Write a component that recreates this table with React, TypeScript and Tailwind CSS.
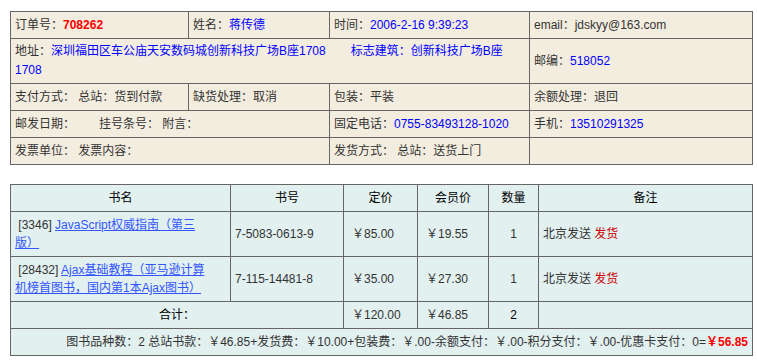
import React from "react";

const td = "border border-[#666] px-[4px] align-middle";

export default function App() {
  return (
    <div className="bg-white w-[757px] h-[362px] pt-[11px] pl-[10px] text-[12px] leading-[18px] text-[#333] font-['Liberation_Sans','Noto_Sans_CJK_SC',sans-serif]">
      {/* Order info */}
      <table className="table-fixed border-collapse w-[742px] bg-[#f3eddf]">
        <colgroup>
          <col className="w-[178px]" />
          <col className="w-[141px]" />
          <col className="w-[200px]" />
          <col className="w-[223px]" />
        </colgroup>
        <tbody>
          <tr className="h-[27px]">
            <td className={td}>
              订单号：<span className="text-[#ff0000] font-bold">708262</span>
            </td>
            <td className={td}>
              姓名：<span className="text-[#0000ff]">蒋传德</span>
            </td>
            <td className={td}>
              时间：<span className="text-[#0000ff]">2006-2-16 9:39:23</span>
            </td>
            <td className={td}>email：jdskyy@163.com</td>
          </tr>
          <tr className="h-[45px]">
            <td className={td + " leading-[19px]"} colSpan={3}>
              地址：<span className="text-[#0000ff]">深圳福田区车公庙天安数码城创新科技广场B座1708</span>
              <span className="ml-[25px] text-[#0000ff]">标志建筑：创新科技广场B座</span>
              <br />
              <span className="text-[#0000ff]">1708</span>
            </td>
            <td className={td}>
              邮编：<span className="text-[#0000ff]">518052</span>
            </td>
          </tr>
          <tr className="h-[27px]">
            <td className={td}>支付方式： 总站：货到付款</td>
            <td className={td}>缺货处理：取消</td>
            <td className={td}>包装：平装</td>
            <td className={td}>余额处理：退回</td>
          </tr>
          <tr className="h-[27px]">
            <td className={td} colSpan={2}>
              邮发日期：<span className="ml-[24px]">挂号条号：</span> 附言：
            </td>
            <td className={td}>
              固定电话：<span className="text-[#0000ff]">0755-83493128-1020</span>
            </td>
            <td className={td}>
              手机：<span className="text-[#0000ff]">13510291325</span>
            </td>
          </tr>
          <tr className="h-[27px]">
            <td className={td} colSpan={2}>发票单位： 发票内容：</td>
            <td className={td}>发货方式： 总站：送货上门</td>
            <td className={td}></td>
          </tr>
        </tbody>
      </table>

      {/* Book list */}
      <table className="table-fixed border-collapse w-[742px] bg-[#e2f0f0] mt-[19px]">
        <colgroup>
          <col className="w-[220px]" />
          <col className="w-[113px]" />
          <col className="w-[74px]" />
          <col className="w-[71px]" />
          <col className="w-[50px]" />
          <col className="w-[214px]" />
        </colgroup>
        <tbody>
          <tr className="h-[27px] text-black">
            <td className={td + " text-center"}>书名</td>
            <td className={td + " text-center"}>书号</td>
            <td className={td + " text-center"}>定价</td>
            <td className={td + " text-center"}>会员价</td>
            <td className={td + " text-center"}>数量</td>
            <td className={td + " text-center"}>备注</td>
          </tr>
          {[
            { id: "3346", line1: "JavaScript权威指南（第三", line2: "版）", isbn: "7-5083-0613-9", price: "85.00", member: "19.55" },
            { id: "28432", line1: "Ajax基础教程（亚马逊计算", line2: "机榜首图书，国内第1本Ajax图书）", isbn: "7-115-14481-8", price: "35.00", member: "27.30" },
          ].map((b) => (
            <tr key={b.id} className="h-[45px]">
              <td className={td}>
                &nbsp;[{b.id}]{" "}
                <a href="#" className="text-[#3355ff] underline">
                  {b.line1}
                  <br />
                  {b.line2}
                </a>
              </td>
              <td className={td}>{b.isbn}</td>
              <td className={td + " pl-[8px]"}>￥{b.price}</td>
              <td className={td + " pl-[8px]"}>￥{b.member}</td>
              <td className={td + " text-center"}>1</td>
              <td className={td}>
                北京发送 <span className="text-[#cc0000]">发货</span>
              </td>
            </tr>
          ))}
          <tr className="h-[27px]">
            <td className={td + " text-center text-black"} colSpan={2}>合计：</td>
            <td className={td + " pl-[8px]"}>￥120.00</td>
            <td className={td + " pl-[8px]"}>￥46.85</td>
            <td className={td + " text-center text-black"}>2</td>
            <td className={td}></td>
          </tr>
          <tr className="h-[27px]">
            <td className={td + " text-right"} colSpan={6}>
              图书品种数：2 总站书款：￥46.85+发货费：￥10.00+包装费：￥.00-余额支付：￥.00-积分支付：￥.00-优惠卡支付：0=
              <span className="text-[#ff0000] font-bold">￥56.85</span>
            </td>
          </tr>
        </tbody>
      </table>
    </div>
  );
}
